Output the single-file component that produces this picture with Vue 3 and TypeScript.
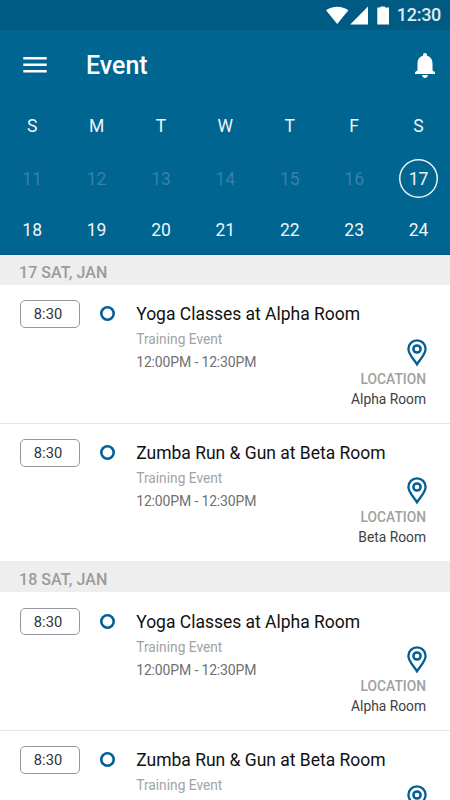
<script setup lang="ts">
interface EventItem {
  time: string
  title: string
  kind: string
  hours: string
  room: string
}
interface EventDay {
  label: string
  events: EventItem[]
}

const weekdays: string[] = ['S', 'M', 'T', 'W', 'T', 'F', 'S']
const pastDays: number[] = [11, 12, 13, 14, 15, 16]
const today = 17
const nextDays: number[] = [18, 19, 20, 21, 22, 23, 24]

const makeEvent = (title: string, room: string): EventItem => ({
  time: '8:30',
  title,
  kind: 'Training Event',
  hours: '12:00PM - 12:30PM',
  room,
})

const days: EventDay[] = ['17 SAT, JAN', '18 SAT, JAN'].map((label) => ({
  label,
  events: [
    makeEvent('Yoga Classes at Alpha Room', 'Alpha Room'),
    makeEvent('Zumba Run & Gun at Beta Room', 'Beta Room'),
  ],
}))
</script>

<template>
  <div class="screen">
    <div class="status">
      <svg class="signals" width="64" height="20" viewBox="0 0 64 20" fill="#fff">
        <path d="M0 4.300C6.200-.6 16.200-.6 22.400 4.300L11.200 18z" />
        <path d="M42 0.600V18.500H24.200z" />
        <path d="M51.300 1.600H54.300V0.500H59V1.600H63V18.500H51.300z" />
      </svg>
      <span class="clock">12:30</span>
    </div>
    <header class="appbar">
      <svg class="menu" width="24" height="16" viewBox="0 0 24 16" fill="#fff">
        <path d="M0.300 0H23.700V2.500H0.300zM0.300 6.500H23.700V9H0.300zM0.300 13H23.700V15.500H0.300z" />
      </svg>
      <h1>Event</h1>
      <svg class="bell" width="20" height="25" viewBox="0 0 20 25" fill="#fff">
        <path d="M10 0C11.300 0 12 .8 12 2V2.700C15.800 3.700 17.500 6.700 17.500 10.500V17.200L20 19.200V21H0V19.200L2.500 17.200V10.500C2.500 6.700 4.200 3.700 8 2.700V2C8 .8 8.700 0 10 0zM7 22H13C12.700 23.800 11.600 24.900 10 24.900S7.300 23.800 7 22z" />
      </svg>
    </header>
    <section class="calendar">
      <div class="week names">
        <span v-for="(d, i) in weekdays" :key="i">{{ d }}</span>
      </div>
      <div class="week current">
        <span v-for="d in pastDays" :key="d" class="past">{{ d }}</span>
        <span class="today">{{ today }}</span>
      </div>
      <div class="week following">
        <span v-for="d in nextDays" :key="d">{{ d }}</span>
      </div>
    </section>
    <main>
      <section v-for="day in days" :key="day.label" class="day">
        <h2>{{ day.label }}</h2>
        <article v-for="event in day.events" :key="event.title" class="event">
          <span class="time">{{ event.time }}</span>
          <span class="dot"></span>
          <div class="details">
            <h3>{{ event.title }}</h3>
            <p class="kind">{{ event.kind }}</p>
            <p class="hours">{{ event.hours }}</p>
            <div class="location">
              <svg width="20" height="28" viewBox="0 0 20 28" fill="none" stroke="#005f93">
                <path d="M10 1.300A8.600 8.600 0 0 0 1.400 10C1.400 15.300 7 20.500 10 25.300C13 20.500 18.600 15.300 18.600 10A8.600 8.600 0 0 0 10 1.300z" stroke-width="2.300" />
                <circle cx="10" cy="10" r="3.600" stroke-width="2.500" />
              </svg>
              <span class="caption">LOCATION</span>
              <span class="room">{{ event.room }}</span>
            </div>
          </div>
        </article>
      </section>
    </main>
  </div>
</template>

<style>
body {
  overflow: hidden;
}
</style>

<style scoped>
.screen {
  width: 450px;
  height: 800px;
  overflow: hidden;
  background: #fff;
  font-family: Roboto, sans-serif;
}
h1, h2, h3, p {
  margin: 0;
}
.status {
  display: flex;
  align-items: center;
  justify-content: flex-end;
  height: 30px;
  padding-right: 9px;
  box-sizing: border-box;
  background: #005b84;
  color: #dfebf1;
}
.signals {
  margin-right: 7px;
  margin-top: 1px;
}
.clock {
  font-size: 18px;
  font-weight: 500;
  letter-spacing: -0.300px;
  line-height: 30px;
}
.appbar {
  display: flex;
  align-items: center;
  height: 70px;
  padding: 0 15px 0 23px;
  box-sizing: border-box;
  background: #006591;
}
.menu {
  margin-right: 39px;
}
h1 {
  flex: 1;
  padding-top: 2px;
  color: #fff;
  font-size: 25px;
  font-weight: 500;
  line-height: 68px;
}
.calendar {
  height: 155px;
  box-sizing: border-box;
  background: #006591;
  border-bottom: 1px solid #005987;
  color: #eef5f8;
  font-size: 17.500px;
}
.week {
  display: grid;
  grid-template-columns: repeat(7, 64.400px);
  justify-items: center;
  align-items: center;
}
.names {
  height: 52px;
}
.current {
  height: 53px;
}
.following {
  height: 50px;
}
.past {
  color: #3781a8;
}
.today {
  width: 39px;
  height: 39px;
  box-sizing: border-box;
  border-radius: 50%;
  box-shadow: inset 0 0 0 1.500px #e8f1f5;
  line-height: 40px;
  text-align: center;
}
h2 {
  height: 30px;
  padding: 3px 19px 0;
  box-sizing: border-box;
  background: #eee;
  color: #9b9b9b;
  font-size: 16px;
  font-weight: 500;
  letter-spacing: 0.060px;
  line-height: 29px;
}
.day + .day h2 {
  height: 31.300px;
  padding-top: 4px;
}
.event {
  display: flex;
  align-items: flex-start;
  height: 138px;
  padding: 15.300px 24px 0 20px;
  box-sizing: border-box;
}
.event + .event {
  padding-top: 15px;
  border-top: 1px solid #e6e6e6;
}
.time {
  width: 60px;
  height: 27.500px;
  box-sizing: border-box;
  border: 1px solid #96969e;
  border-radius: 5px;
  padding-right: 4px;
  color: #333;
  font-size: 14.700px;
  line-height: 26px;
  text-align: center;
}
.dot {
  width: 15px;
  height: 15px;
  margin: 6px 21.200px 0 20px;
  box-sizing: border-box;
  border-radius: 50%;
  box-shadow: inset 0 0 0 2.600px #005f93;
}
.details {
  flex: 1;
}
h3 {
  color: #111;
  font-size: 17.500px;
  font-weight: 400;
  letter-spacing: -0.010px;
  line-height: 28px;
}
.kind {
  color: #a3a3a3;
  font-size: 13.750px;
  line-height: 22px;
}
.hours {
  padding-top: 1px;
  color: #707070;
  font-size: 14px;
  letter-spacing: -0.150px;
  line-height: 23px;
}
.location {
  display: flex;
  flex-direction: column;
  align-items: flex-end;
  margin-top: -35.600px;
}
.location svg {
  margin-right: -1px;
}
.caption {
  color: #a0a0a0;
  font-size: 13.800px;
  font-weight: 500;
  line-height: 24px;
}
.room {
  color: #404040;
  font-size: 13.800px;
  line-height: 16px;
}
</style>
